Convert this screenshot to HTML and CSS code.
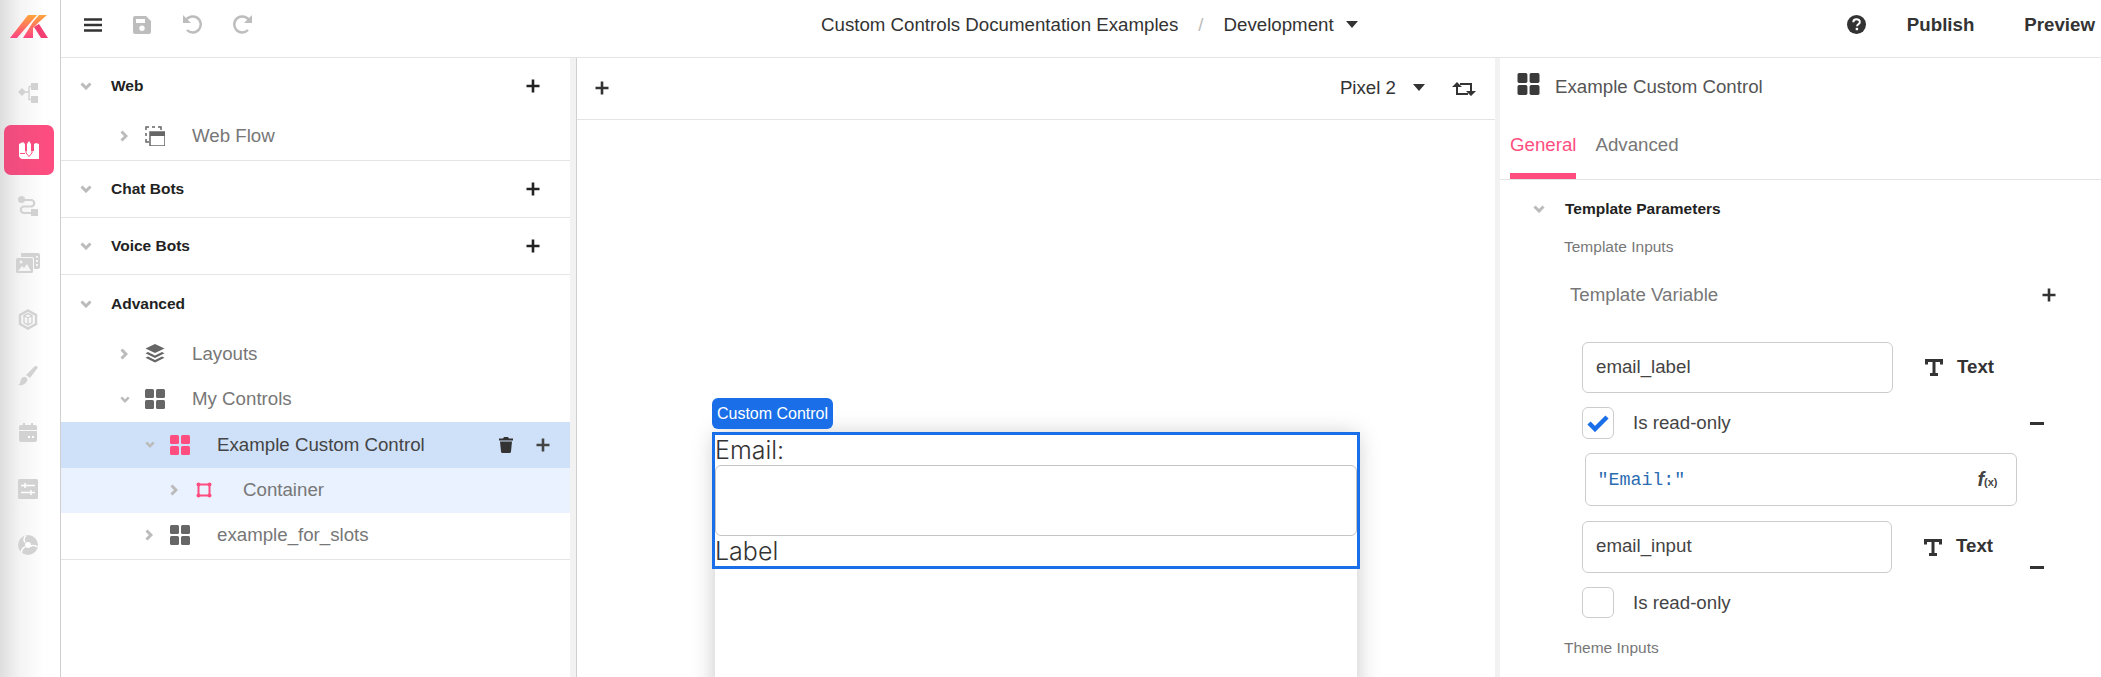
FILE: index.html
```html
<!DOCTYPE html>
<html lang="en">
<head>
  <meta charset="UTF-8">
  <title>Custom Controls Documentation Examples</title>
  <link rel="stylesheet" href="styles.css">
</head>
<body>
  <svg class="defs" aria-hidden="true">
    <symbol id="grid" viewBox="0 0 20 20"><rect x="0" y="0" width="9" height="9" rx="1.5"/><rect x="11" y="0" width="9" height="9" rx="1.5"/><rect x="0" y="11" width="9" height="9" rx="1.5"/><rect x="11" y="11" width="9" height="9" rx="1.5"/></symbol>
    <symbol id="plus" viewBox="0 0 14 14"><path d="M7 .5v13M.5 7h13" fill="none" stroke="currentColor" stroke-width="2.6"/></symbol>
    <symbol id="down" viewBox="0 0 12 8"><path d="M1.5 1.5 6 6l4.500-4.500" fill="none" stroke="currentColor" stroke-width="3"/></symbol>
    <symbol id="right" viewBox="0 0 8 12"><path d="M1.5 1.5 6 6l-4.500 4.500" fill="none" stroke="currentColor" stroke-width="3"/></symbol>
    <symbol id="caret" viewBox="0 0 12 7"><path d="M0 0h12L6 7z"/></symbol>
    <symbol id="t" viewBox="0 0 18 17"><path d="M1.500 5.500V1.500h15v4M9 1.500v14M5 15.500h8" fill="none" stroke="currentColor" stroke-width="3"/></symbol>
  </svg>

  <nav class="rail">
    <div class="logo">
      <svg width="38" height="23" viewBox="0 0 38 23">
        <defs><linearGradient id="akgrad" x1="0" y1="1" x2="0" y2="0"><stop offset="0" stop-color="#ff4380"/><stop offset="1" stop-color="#ffa53c"/></linearGradient></defs>
        <path d="M0 23h7L27 0h-9zM13 23h10V7zM23 13l6-6 8-7h-8l-6 7z" fill="url(#akgrad)"/>
        <path d="M24 12l7 11h7L29 9z" fill="#f43f72"/>
      </svg>
    </div>
    <div class="rail-spot"><svg width="20" height="20" viewBox="0 0 20 20"><path d="M0 9l4-4 4 4-4 4zM13 0h7v7h-7zM13 13h7v7h-7z" fill="#d2d2d2"/><path d="M7 9h4M11 3.500v13h3M11 3.500h3" fill="none" stroke="#d2d2d2" stroke-width="1.500"/></svg></div>
    <div class="rail-spot"><div class="tile"><svg width="20" height="18" viewBox="0 0 20 18"><path d="M0 10h20v8H4a4 4 0 0 1-4-4z" fill="#fff"/><path d="M0 3l4-2 2 2v9l-3 1-3-1zM8 3l2-3 2 3v9l-2 3-2-3zM15 3l2-1 3 1v9h-5z" fill="#fff"/><path d="M7 3v9l3 3.500 3-3.500V3M1 12.500h5" fill="none" stroke="#ff4d80"/></svg></div></div>
    <div class="rail-spot"><svg width="20" height="20" viewBox="0 0 20 20"><circle cx="3.500" cy="3.500" r="3.500" fill="#d2d2d2"/><rect x="13" y="13" width="7" height="7" fill="#d2d2d2"/><path d="M6 4h7a3 3 0 0 1 0 6.500H6a3 3 0 0 0 0 6.500h8" fill="none" stroke="#d2d2d2" stroke-width="2.200"/></svg></div>
    <div class="rail-spot"><svg width="24" height="20" viewBox="0 0 24 20"><path d="M5 0h17a2 2 0 0 1 2 2v12a2 2 0 0 1-2 2h-4V6a2 2 0 0 0-2-2H5z" fill="#d2d2d2"/><rect x="0" y="5" width="17" height="15" rx="1.500" fill="#d2d2d2"/><path d="M2 18l4-5 2 2 3-4 4 7z" fill="#f6f6f6"/><circle cx="5" cy="9" r="1.500" fill="#f6f6f6"/><path d="M20 3h2v2h-2zM20 7h2v2h-2zM20 11h2v2h-2z" fill="#f6f6f6"/></svg></div>
    <div class="rail-spot"><svg width="20" height="21" viewBox="0 0 20 21"><path d="M10 1.500l8 4.500v9l-8 4.500L2 15V6z" fill="none" stroke="#d2d2d2" stroke-width="2.400"/><path d="M6 6.500l4-2 4 2v7l-4 2.500-4-2.500zM6 6.500l4 2.500 4-2.500M10 9v7" fill="none" stroke="#d2d2d2" stroke-width="1.400"/></svg></div>
    <div class="rail-spot"><svg width="20" height="20" viewBox="0 0 20 20"><path d="M18 0c1.500 0 2 1 1.500 2L12 12l-4-3 8-8c.7-.7 1.300-1 2-1zM6 11c3 0 4 2 3 4-1 3-5 5-9 4 2-1 2-2 2.500-4 .4-2 1.500-4 3.500-4z" fill="#d2d2d2"/></svg></div>
    <div class="rail-spot"><svg width="18" height="19" viewBox="0 0 18 19"><path d="M4 0h2v2h6V0h2v2h2a2 2 0 0 1 2 2v3H0V4a2 2 0 0 1 2-2h2zM0 8h18v9a2 2 0 0 1-2 2H2a2 2 0 0 1-2-2z" fill="#d2d2d2"/><path d="M9 13h2v2H9zM13 13h2v2h-2z" fill="#fff"/></svg></div>
    <div class="rail-spot"><svg width="20" height="20" viewBox="0 0 20 20"><rect width="20" height="20" rx="1.500" fill="#d2d2d2"/><path d="M3 6.500h14M3 13.500h14M7 4v5M13 11v5" stroke="#fff" stroke-width="1.500"/></svg></div>
    <div class="rail-spot"><svg width="20" height="20" viewBox="0 0 20 20"><circle cx="10" cy="10" r="10" fill="#d2d2d2"/><circle cx="10" cy="10" r="3" fill="#fff"/><path d="M8 .5C5.500 3 6 6 7 7.500M19.500 12c-2.500-2-5.500-2-7-.5M3.500 17.500c0-3 2-5 3.500-5.500" stroke="#fff" stroke-width="1.500" fill="none"/></svg></div>
  </nav>

  <div class="main">
    <header class="topbar">
      <div class="tools">
        <svg class="tool-dark" width="18" height="14" viewBox="0 0 18 14"><path d="M0 1.500h18M0 7h18M0 12.500h18" stroke="currentColor" stroke-width="2.500"/></svg>
        <svg class="tool-off" width="18" height="18" viewBox="0 0 18 18"><path d="M2 0h11l5 5v11a2 2 0 0 1-2 2H2a2 2 0 0 1-2-2V2a2 2 0 0 1 2-2zM3 3v4h9V3zM9 9.500a2.700 2.700 0 1 0 0 5.400 2.700 2.700 0 0 0 0-5.400z" fill="currentColor" fill-rule="evenodd"/></svg>
        <svg class="tool-off" width="20" height="19" viewBox="0 0 20 19"><path d="M3.500 6A8 8 0 1 1 5 15" fill="none" stroke="currentColor" stroke-width="2.500"/><path d="M1 0v8h8z" fill="currentColor"/></svg>
        <svg class="tool-off" width="20" height="19" viewBox="0 0 20 19"><path d="M16.500 6A8 8 0 1 0 15 15" fill="none" stroke="currentColor" stroke-width="2.500"/><path d="M19 0v8h-8z" fill="currentColor"/></svg>
      </div>
      <div class="crumb">
        <span>Custom Controls Documentation Examples</span>
        <span class="slash">/</span>
        <span>Development</span>
        <svg class="caret" width="12" height="7"><use href="#caret"/></svg>
      </div>
      <div class="actions">
        <svg class="help" width="19" height="19" viewBox="0 0 19 19"><circle cx="9.500" cy="9.500" r="9.500" fill="#333"/><path d="M6.300 7.200c0-4 6.500-4 6.500-.2 0 2.300-2.700 2.300-2.700 4.200" fill="none" stroke="#fff" stroke-width="2"/><rect x="8.700" y="12.800" width="2.400" height="2.400" fill="#fff"/></svg>
        <span class="publish">Publish</span>
        <span class="preview">Preview</span>
      </div>
    </header>

    <div class="body">
      <aside class="tree">
        <div class="section">
          <div class="sec-head"><svg class="chev-down" width="12" height="8"><use href="#down"/></svg><b>Web</b><svg class="add" width="14" height="14"><use href="#plus"/></svg></div>
          <div class="row lvl1">
            <svg class="chev-right" width="8" height="12"><use href="#right"/></svg>
            <svg class="ico" width="20" height="20" viewBox="0 0 20 20"><path d="M1 4V1h3M7 1h3M13 1h3v3M1 7v3M1 13v3h3" fill="none" stroke="#666" stroke-width="1.500"/><path d="M5 6h15v14H5z" fill="#fff" stroke="#666" stroke-width="1.500"/><path d="M5 6h15v4H5z" fill="#666"/></svg>
            <span>Web Flow</span>
          </div>
        </div>
        <div class="section">
          <div class="sec-head"><svg class="chev-down" width="12" height="8"><use href="#down"/></svg><b>Chat Bots</b><svg class="add" width="14" height="14"><use href="#plus"/></svg></div>
        </div>
        <div class="section">
          <div class="sec-head"><svg class="chev-down" width="12" height="8"><use href="#down"/></svg><b>Voice Bots</b><svg class="add" width="14" height="14"><use href="#plus"/></svg></div>
        </div>
        <div class="section">
          <div class="sec-head tall"><svg class="chev-down" width="12" height="8"><use href="#down"/></svg><b>Advanced</b></div>
          <div class="row lvl1">
            <svg class="chev-right" width="8" height="12"><use href="#right"/></svg>
            <svg class="ico" width="20" height="19" viewBox="0 0 20 19"><path d="M10 0l9.500 4.500L10 9 .5 4.500z" fill="#666"/><path d="M3 8l7 3.400L17 8l2.500 1.200L10 14 .5 9.200zM3 12.500l7 3.400 7-3.400 2.500 1.200L10 18.500.5 13.700z" fill="#666"/></svg>
            <span>Layouts</span>
          </div>
          <div class="row lvl1">
            <svg class="chev-down" width="10" height="7"><use href="#down"/></svg>
            <svg class="ico grey-fill" width="20" height="20"><use href="#grid"/></svg>
            <span>My Controls</span>
          </div>
          <div class="row lvl2 selected">
            <svg class="chev-down" width="10" height="7"><use href="#down"/></svg>
            <svg class="ico pink-fill" width="20" height="20"><use href="#grid"/></svg>
            <span>Example Custom Control</span>
            <svg class="trash" width="14" height="16" viewBox="0 0 14 16"><path d="M5 0h4l1 1.500h4v2H0v-2h4zM1 4.500h12l-1 10a1.500 1.500 0 0 1-1.500 1.500h-7A1.500 1.500 0 0 1 2 14.500z" fill="#333"/></svg>
            <svg class="add-row" width="14" height="14"><use href="#plus"/></svg>
          </div>
          <div class="row lvl3 child">
            <svg class="chev-right" width="8" height="12"><use href="#right"/></svg>
            <svg class="ico" width="16" height="16" viewBox="0 0 16 16"><path d="M2.500 2.500h11v11h-11z" fill="none" stroke="#ff4d80" stroke-width="2"/><g fill="#ff4d80"><circle cx="2.500" cy="2.500" r="2"/><circle cx="13.500" cy="2.500" r="2"/><circle cx="2.500" cy="13.500" r="2"/><circle cx="13.500" cy="13.500" r="2"/></g></svg>
            <span>Container</span>
          </div>
          <div class="row lvl2 tail">
            <svg class="chev-right" width="8" height="12"><use href="#right"/></svg>
            <svg class="ico grey-fill" width="20" height="20"><use href="#grid"/></svg>
            <span>example_for_slots</span>
          </div>
        </div>
      </aside>

      <main class="stage">
        <div class="stage-bar">
          <svg class="stage-add" width="14" height="14"><use href="#plus"/></svg>
          <span class="device-name">Pixel 2</span>
          <svg class="caret wide" width="12" height="7"><use href="#caret"/></svg>
          <svg class="rotate" width="24" height="16" viewBox="0 0 24 16"><path d="M5 3v10h11M19 13V3H8" fill="none" stroke="#333" stroke-width="2"/><path d="M0 6l5-5 5 5zM14 10l5 5 5-5z" fill="#333"/></svg>
        </div>
        <div class="canvas">
          <div class="device">
            <div class="sel-frame"><span class="sel-tag">Custom Control</span></div>
            <div class="dev-label">Email:</div>
            <div class="dev-input"></div>
            <div class="dev-label">Label</div>
          </div>
        </div>
      </main>

      <aside class="props">
        <div class="prop-head">
          <svg class="dark-fill" width="23" height="22"><use href="#grid"/></svg>
          <span>Example Custom Control</span>
        </div>
        <div class="tabs">
          <span class="tab active">General</span>
          <span class="tab">Advanced</span>
        </div>
        <div class="param-head"><svg class="chev-down" width="12" height="8"><use href="#down"/></svg><b>Template Parameters</b></div>
        <div class="group-label">Template Inputs</div>
        <div class="var-head"><span>Template Variable</span><svg width="14" height="14"><use href="#plus"/></svg></div>

        <div class="vars">
          <div class="var-row">
            <input class="name-input" value="email_label">
            <svg class="t-icon" width="18" height="17"><use href="#t"/></svg>
            <b class="type">Text</b>
          </div>
          <div class="check-row">
            <span class="check"><svg width="22" height="18" viewBox="0 0 22 18"><path d="M2 9l6 6L20 3" fill="none" stroke="#1a6fe8" stroke-width="4.500"/></svg></span>
            <span>Is read-only</span>
            <i class="minus"></i>
          </div>
          <div class="expr"><span>"Email:"</span><span class="fx">f<small>(x)</small></span></div>
          <div class="var-row second">
            <input class="name-input short" value="email_input">
            <svg class="t-icon" width="18" height="17"><use href="#t"/></svg>
            <b class="type">Text</b>
            <i class="minus low"></i>
          </div>
          <div class="check-row last">
            <span class="check"></span>
            <span>Is read-only</span>
          </div>
        </div>
        <div class="group-label theme">Theme Inputs</div>
      </aside>
    </div>
  </div>
</body>
</html>
```

FILE: styles.css
```css
* {
  box-sizing: border-box;
}
html, body {
  height: 100%;
}
body {
  margin: 0;
  display: flex;
  overflow: hidden;
  font-family: "Liberation Sans", Arial, sans-serif;
  font-size: 18.7px;
  color: #333;
  background: #fff;
}
.defs {
  display: none;
}
b {
  font-weight: bold;
}

/* left icon rail */
.rail {
  width: 61px;
  flex: none;
  border-right: 1px solid #d0d0d0;
  background: linear-gradient(90deg, #dedede 0, #f4f4f4 20px, #fff 44px);
}
.logo {
  height: 65px;
  padding: 15px 0 0 10px;
}
.rail-spot {
  height: 56.5px;
  display: flex;
  align-items: center;
  justify-content: center;
  padding-right: 4px;
}
.tile {
  width: 50px;
  height: 50px;
  margin-left: 2px;
  border-radius: 7px;
  background: linear-gradient(90deg, #ee4c7e, #ff4d80);
  display: flex;
  align-items: center;
  justify-content: center;
}

.main {
  flex: 1;
  min-width: 0;
  display: flex;
  flex-direction: column;
}

/* top bar */
.topbar {
  height: 58px;
  flex: none;
  display: flex;
  align-items: center;
  border-bottom: 1px solid #e4e4e4;
  padding-bottom: 8px;
}
.tools {
  display: flex;
  align-items: center;
  gap: 31px;
  padding-left: 23px;
  width: 760px;
}
.tool-dark {
  color: #333;
}
.tool-off {
  color: #bdbdbd;
}
.crumb {
  display: flex;
  align-items: center;
}
.slash {
  color: #bbb;
  margin: 0 20px;
}
.caret {
  fill: #333;
  margin-left: 12px;
}
.caret.wide {
  margin-left: 17px;
}
.actions {
  margin-left: auto;
  display: flex;
  align-items: center;
  font-weight: bold;
}
.publish {
  margin-left: 41px;
}
.preview {
  margin: 0 6px 0 50px;
}

.body {
  flex: 1;
  display: flex;
  min-height: 0;
}

/* project tree */
.tree {
  width: 515px;
  flex: none;
  border-right: 6px solid #f2f2f2;
  box-shadow: 1px 0 0 #d0d0d0;
}
.section {
  border-bottom: 1px solid #e4e4e4;
}
.sec-head {
  height: 56px;
  display: flex;
  align-items: center;
  padding: 0 30px 0 19px;
  font-size: 15.500px;
  color: #222;
}
.sec-head.tall {
  height: 56.500px;
  padding-top: 2px;
}
.sec-head b {
  margin-left: 19px;
}
.add {
  margin-left: auto;
}
.chev-down {
  color: #bbb;
  flex: none;
}
.chev-right {
  color: #bbb;
  flex: none;
  margin: 0 2px 0 0;
}
.row {
  height: 45.500px;
  display: flex;
  align-items: center;
  color: #777;
}
.section:first-child .row,
.row.tail {
  padding-bottom: 2px;
}
.row .ico {
  flex: none;
  margin-left: 15px;
  margin-right: 27px;
}
.lvl1 {
  padding-left: 59px;
}
.lvl2 {
  padding-left: 84px;
}
.lvl3 {
  padding-left: 109px;
}
.lvl3 .ico {
  margin-left: 16px;
  margin-right: 31px;
}
.selected {
  background: #cfe1f9;
  color: #444;
}
.child {
  background: #e9f2fe;
}
.grey-fill {
  fill: #666;
}
.pink-fill {
  fill: #ff4d80;
}
.dark-fill {
  fill: #3a3a3a;
}
.trash {
  margin-left: auto;
}
.add-row {
  margin: 0 20px 0 23px;
}

/* middle canvas */
.stage {
  width: 923px;
  flex: none;
  display: flex;
  flex-direction: column;
  min-height: 0;
  margin-left: 1px;
  border-right: 5px solid #f2f2f2;
}
.stage-bar {
  height: 62px;
  flex: none;
  display: flex;
  align-items: center;
  padding: 0 19px 2px 18px;
  border-bottom: 1px solid #e4e4e4;
}
.stage-add {
  margin-right: auto;
}
.canvas {
  flex: 1;
  padding: 315px 0 0 138px;
  overflow: hidden;
}
.device {
  position: relative;
  width: 642px;
  height: 500px;
  box-shadow: 0 0 22px rgba(0, 0, 0, .22);
  font-family: Inter, "Liberation Sans", sans-serif;
  font-weight: 300;
  font-size: 25px;
  color: #333;
}
.dev-label {
  height: 30px;
  line-height: 30px;
}
.dev-input {
  height: 71px;
  border: 1px solid #c4c4c4;
  border-radius: 6px;
}
.sel-frame {
  position: absolute;
  top: -3px;
  left: -3px;
  right: -3px;
  height: 137px;
  border: 3px solid #1a6fe8;
}
.sel-tag {
  position: absolute;
  top: -37px;
  left: -3px;
  width: 121px;
  height: 31px;
  border-radius: 6px;
  background: #1a6fe8;
  color: #fff;
  font-family: "Liberation Sans", Arial, sans-serif;
  font-weight: normal;
  font-size: 16px;
  line-height: 31px;
  text-align: center;
}
.rotate {
  margin: 2px 0 0 27px;
}

/* properties */
.props {
  flex: 1;
  min-width: 0;
}
.prop-head {
  height: 60px;
  display: flex;
  align-items: center;
  gap: 15px;
  padding: 0 0 2px 17px;
  color: #555;
}
.prop-head svg {
  margin-top: -6px;
}
.tabs {
  height: 62px;
  display: flex;
  gap: 19px;
  padding-left: 10px;
  border-bottom: 1px solid #e4e4e4;
}
.tab {
  height: 61px;
  border-bottom: 6px solid transparent;
  padding-bottom: 2px;
  display: flex;
  align-items: center;
  color: #777;
}
.tab.active {
  color: #ff4d80;
  border-bottom-color: #ff4d80;
}
.param-head {
  height: 58px;
  display: flex;
  align-items: center;
  gap: 20px;
  padding-left: 33px;
  font-size: 15.500px;
  color: #222;
}
.group-label {
  height: 18px;
  line-height: 18px;
  margin-left: 64px;
  font-size: 15.500px;
  color: #777;
}
.var-head {
  margin: 15px 45px 0 70px;
  height: 48px;
  display: flex;
  align-items: center;
  justify-content: space-between;
  color: #777;
}
.var-head svg {
  color: #333;
}
.vars {
  margin: 23px 57px 0 82px;
}
.var-row {
  height: 51px;
  display: flex;
  align-items: center;
}
.var-row.second {
  margin-top: 15px;
  height: 52px;
}
.name-input {
  width: 311px;
  height: 100%;
  border: 1px solid #ccc;
  border-radius: 6px;
  padding: 0 13px 2px;
  font: inherit;
  color: #444;
}
.name-input.short {
  width: 310px;
}
.t-icon {
  margin: 0 14px 0 32px;
  color: #333;
  flex: none;
}
.type {
  color: #333;
  padding-bottom: 2px;
}
.check-row {
  margin-top: 14px;
  height: 32px;
  display: flex;
  align-items: center;
  gap: 19px;
  color: #444;
}
.check-row.last {
  height: 31px;
}
.check {
  width: 32px;
  height: 100%;
  border: 1px solid #ccc;
  border-radius: 6px;
  display: flex;
  align-items: center;
  justify-content: center;
}
.minus {
  width: 14px;
  height: 3px;
  background: #333;
  margin-left: auto;
}
.minus.low {
  align-self: flex-end;
  margin-bottom: 4px;
}
.expr {
  margin: 14px 0 0 2.500px;
  width: 432px;
  height: 53px;
  border: 1px solid #ccc;
  border-radius: 6px;
  padding: 0 18px 0 12px;
  display: flex;
  align-items: center;
  justify-content: space-between;
  font-family: "Liberation Mono", monospace;
  font-size: 18.300px;
  color: #2b6cb0;
}
.fx {
  font-family: "Liberation Sans", sans-serif;
  font-style: italic;
  font-weight: bold;
  font-size: 20px;
  color: #444;
}
.fx small {
  font-style: normal;
  font-size: 11px;
}
.group-label.theme {
  margin-top: 21px;
}
```
